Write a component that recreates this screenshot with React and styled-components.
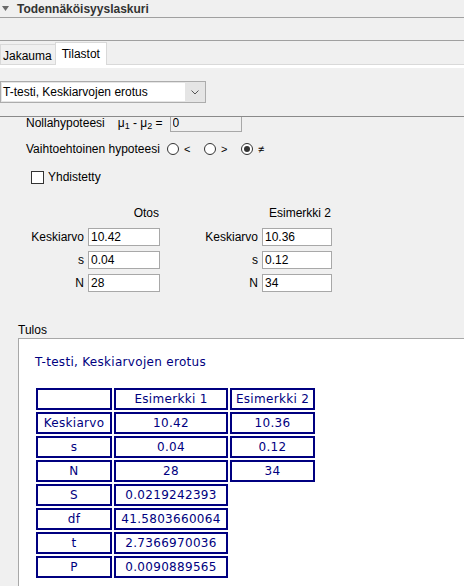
import React from "react";
import styled, { createGlobalStyle } from "styled-components";

const GlobalStyle = createGlobalStyle`
  html, body { margin: 0; padding: 0; background: #f0f0f0; }
  body {
    font-family: "Liberation Sans", Arial, sans-serif;
    font-size: 12px;
    color: #000;
  }
  * { box-sizing: border-box; }
`;

const Frame = styled.div`
  width: 464px;
  height: 586px;
  overflow: hidden;
  display: flex;
  flex-direction: column;
  background: #f0f0f0;
`;

const TitleBar = styled.div`
  height: 18px;
  flex: none;
  border-bottom: 1px solid #a0a0a0;
  display: flex;
  align-items: center;
  gap: 8px;
  padding-left: 2px;
  font-weight: bold;
  color: #333;
`;

const Band = styled.div`
  height: 23px;
  flex: none;
  border-bottom: 1px solid #a0a0a0;
`;

const TabBar = styled.div`
  height: 24px;
  flex: none;
  display: flex;
  align-items: flex-end;
  border-bottom: 1px solid #d9d9d9;
`;

const Tab = styled.div`
  display: flex;
  align-items: center;
  height: ${(p) => (p.$selected ? "23px" : "20px")};
  margin-bottom: ${(p) => (p.$selected ? "-1px" : "0")};
  margin-left: ${(p) => (p.$selected ? "-1px" : "0")};
  padding: ${(p) => (p.$selected ? "0 6px 0 6px" : "3px 3px 0 2px")};
  border: 1px solid #d9d9d9;
  border-bottom: none;
  background: ${(p) => (p.$selected ? "#ffffff" : "#f0f0f0")};
  position: relative;
  z-index: ${(p) => (p.$selected ? 1 : 0)};
`;

const WhiteStrip = styled.div`
  height: 3px;
  flex: none;
  background: #ffffff;
`;

const ToolRow = styled.div`
  flex: none;
  padding: 13px 0;
  border-bottom: 1px solid #8a8a8a;
`;

const Combo = styled.div`
  width: 206px;
  height: 22px;
  display: flex;
  border: 1px solid #acacac;
  background: #e5e5e5;
  padding: 1px;
`;

const ComboText = styled.div`
  flex: 1;
  background: #ffffff;
  display: flex;
  align-items: center;
  padding-left: 1px;
  white-space: nowrap;
`;

const ComboArrow = styled.div`
  width: 19px;
  display: flex;
  align-items: center;
  justify-content: center;
`;

const Viewport = styled.div`
  flex: 1;
  overflow: hidden;
  display: flex;
  flex-direction: column;
`;

const Scrolled = styled.div`
  flex: 1;
  margin-top: -3px;
  display: flex;
  flex-direction: column;
`;

const FormRow = styled.div`
  height: 18px;
  display: flex;
  align-items: center;
  padding-left: ${(p) => p.$indent || 26}px;
  margin-top: ${(p) => p.$top || 0}px;
  white-space: nowrap;
`;

const MuLabel = styled.span`
  margin-left: 13px;
`;

const Sub = styled.span`
  font-size: 9px;
  vertical-align: -2px;
`;

const Field = styled.input`
  width: ${(p) => p.$w || 72}px;
  height: ${(p) => p.$h || 18}px;
  margin: 0 0 0 ${(p) => p.$ml || 0}px;
  padding: 0 2px;
  border: 1px solid #a8a8a8;
  border-radius: 0;
  background: ${(p) => (p.$muted ? "#f0f0f0" : "#ffffff")};
  font-family: "Liberation Sans", Arial, sans-serif;
  font-size: 12px;
  color: #000;
  outline: none;
`;

const Options = styled.div`
  display: flex;
  align-items: center;
  gap: 13px;
  margin-left: 7px;
`;

const Option = styled.label`
  display: flex;
  align-items: center;
  gap: 5px;
`;

const Radio = styled.span`
  width: 12px;
  height: 12px;
  border-radius: 50%;
  border: 1px solid #333;
  background: #fff;
  display: grid;
  place-items: center;
  &::after {
    content: "";
    width: 6px;
    height: 6px;
    border-radius: 50%;
    background: ${(p) => (p.$checked ? "#333" : "transparent")};
  }
`;

const OptText = styled.span`
  display: inline-block;
  width: 7px;
  font-size: 11px;
`;

const Check = styled.span`
  width: 13px;
  height: 13px;
  border: 1px solid #333;
  background: #fff;
  margin-right: 4px;
`;

const ValuesGrid = styled.div`
  margin-top: 20px;
  display: grid;
  grid-template-columns: 84px 72px 94px 70px;
  grid-template-rows: 17px 18px 18px 18px;
  column-gap: 4px;
  row-gap: 5px;
  align-items: center;
`;

const ColHead = styled.div`
  grid-column: span 2;
  align-self: start;
  line-height: 15px;
  text-align: right;
  padding-right: 1px;
`;

const FieldLabel = styled.div`
  text-align: right;
  white-space: nowrap;
`;

const SectionLabel = styled.div`
  margin-top: 30px;
  padding-left: 18px;
  line-height: 16px;
`;

const ResultPanel = styled.div`
  flex: 1;
  margin-left: 18px;
  background: #ffffff;
  border-top: 1px solid #a8a8a8;
  border-left: 1px solid #a8a8a8;
  padding: 16px 0 0 16px;
  font-family: "DejaVu Sans", Verdana, sans-serif;
  font-size: 12px;
  letter-spacing: 0.3px;
  color: #000080;
`;

const ResultTitle = styled.div`
  line-height: 15px;
  white-space: nowrap;
`;

const Table = styled.table`
  margin-top: 16px;
  margin-left: -1px;
  border-collapse: separate;
  border-spacing: 2px;
`;

const Cell = styled.td`
  box-sizing: border-box;
  border: 2px solid #000080;
  height: 22px;
  padding: 0;
  width: ${(p) => (p.$w ? `${p.$w}px` : "auto")};
  text-align: center;
  color: #000080;
  font-family: "DejaVu Sans", Verdana, sans-serif;
  font-size: 12px;
  letter-spacing: 0.3px;
  line-height: 14px;
  white-space: nowrap;
`;

const Triangle = () => (
  <svg width="7" height="5" viewBox="0 0 7 5">
    <path d="M0 0 H7 L3.5 5 Z" fill="#6a6a6a" />
  </svg>
);

const Chevron = () => (
  <svg width="8" height="5" viewBox="0 0 8 5">
    <path d="M0.5 0.5 L4 4 L7.5 0.5" fill="none" stroke="#555" strokeWidth="1" />
  </svg>
);

const inputs = [
  { label: "Keskiarvo", a: "10.42", b: "10.36" },
  { label: "s", a: "0.04", b: "0.12" },
  { label: "N", a: "28", b: "34" },
];

const tableRows = [
  ["Keskiarvo", "10.42", "10.36"],
  ["s", "0.04", "0.12"],
  ["N", "28", "34"],
  ["S", "0.0219242393"],
  ["df", "41.5803660064"],
  ["t", "2.7366970036"],
  ["P", "0.0090889565"],
];

export default function App() {
  return (
    <Frame>
      <GlobalStyle />
      <TitleBar>
        <Triangle />
        <span>Todennäköisyyslaskuri</span>
      </TitleBar>
      <Band />
      <TabBar>
        <Tab>Jakauma</Tab>
        <Tab $selected>Tilastot</Tab>
      </TabBar>
      <WhiteStrip />
      <ToolRow>
        <Combo>
          <ComboText>T-testi, Keskiarvojen erotus</ComboText>
          <ComboArrow>
            <Chevron />
          </ComboArrow>
        </Combo>
      </ToolRow>
      <Viewport>
        <Scrolled>
          <FormRow>
            <span>Nollahypoteesi</span>
            <MuLabel>
              μ<Sub>1</Sub> - μ<Sub>2</Sub> =
            </MuLabel>
            <Field $ml={7} $h={17} $muted readOnly value="0" />
          </FormRow>
          <FormRow $top={8}>
            <span>Vaihtoehtoinen hypoteesi</span>
            <Options>
              <Option>
                <Radio />
                <OptText>&lt;</OptText>
              </Option>
              <Option>
                <Radio />
                <OptText>&gt;</OptText>
              </Option>
              <Option>
                <Radio $checked />
                <OptText>≠</OptText>
              </Option>
            </Options>
          </FormRow>
          <FormRow $top={10} $indent={31}>
            <Check />
            <span>Yhdistetty</span>
          </FormRow>
          <ValuesGrid>
            <ColHead>Otos</ColHead>
            <ColHead>Esimerkki 2</ColHead>
            {inputs.map((r) => (
              <React.Fragment key={r.label}>
                <FieldLabel>{r.label}</FieldLabel>
                <Field readOnly value={r.a} />
                <FieldLabel>{r.label}</FieldLabel>
                <Field $w={70} readOnly value={r.b} />
              </React.Fragment>
            ))}
          </ValuesGrid>
          <SectionLabel>Tulos</SectionLabel>
          <ResultPanel>
            <ResultTitle>T-testi, Keskiarvojen erotus</ResultTitle>
            <Table>
              <tbody>
                <tr>
                  <Cell $w={76}></Cell>
                  <Cell $w={114}>Esimerkki 1</Cell>
                  <Cell $w={85}>Esimerkki 2</Cell>
                </tr>
                {tableRows.map((row) => (
                  <tr key={row[0]}>
                    {row.map((c, i) => (
                      <Cell key={i}>{c}</Cell>
                    ))}
                  </tr>
                ))}
              </tbody>
            </Table>
          </ResultPanel>
        </Scrolled>
      </Viewport>
    </Frame>
  );
}
